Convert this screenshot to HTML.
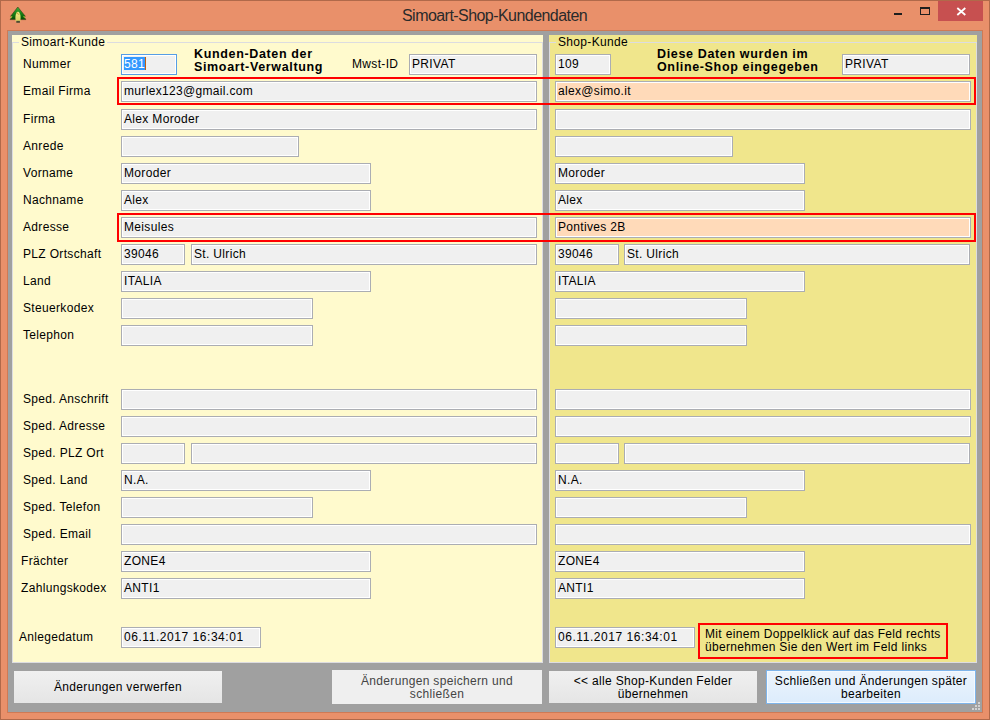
<!DOCTYPE html>
<html><head><meta charset="utf-8"><style>
*{margin:0;padding:0;box-sizing:border-box}
html,body{width:990px;height:720px;overflow:hidden;background:#e9906a}
body{position:relative;font-family:"Liberation Sans",sans-serif;font-size:12px;letter-spacing:0.33px;color:#000}
.a{position:absolute}
.f{position:absolute;height:21px;border:1px solid #abadb3;background:#f0f0f0;box-shadow:inset 0 0 0 1px #fff}
.t{position:absolute;white-space:pre;line-height:14px}
.lb{position:absolute;white-space:pre;line-height:14px}
.red{position:absolute;border:2px solid #ff0000}
.btn{position:absolute;text-align:center;line-height:13px;padding-top:1px;color:#000;display:flex;align-items:center;justify-content:center}
</style></head><body>

<div class="a" style="left:0;top:0;width:990px;height:720px;border:1px solid #b0694a"></div>
<svg class="a" style="left:5px;top:3px" width="25" height="25" viewBox="5 3 25 25">
<defs><linearGradient id="g1" x1="0" y1="0" x2="0" y2="1"><stop offset="0" stop-color="#3fb23a"/><stop offset="0.6" stop-color="#137a12"/><stop offset="1" stop-color="#064806"/></linearGradient>
<linearGradient id="g2" x1="0" y1="0" x2="0" y2="1"><stop offset="0" stop-color="#f4ee8a"/><stop offset="1" stop-color="#d8cf60"/></linearGradient></defs>
<path d="M17.8 7 L25.3 16.3 L24 16.6 L25.8 19.6 L10.2 19.6 L12 16.6 L10.6 16.3 Z" fill="url(#g1)" stroke="#3a3a10" stroke-width="0.6"/>
<path d="M10.8 16.2 L12.6 16.2 L11 18.6 Z M24.8 16.2 L23 16.2 L24.6 18.6 Z" fill="#9acd32"/>
<path d="M18 11.6 C19.9 12.4 20.7 15 20.6 18 L20.3 21.6 L15.7 21.6 L15.4 18 C15.3 15 16.1 12.4 18 11.6 Z" fill="url(#g2)"/>
<circle cx="17.3" cy="13.4" r="0.8" fill="#c8b040"/><circle cx="18.8" cy="14.2" r="0.7" fill="#c8b040"/>
<rect x="16.3" y="20.8" width="3.6" height="2" fill="#4a4a30"/>
</svg>
<div class="t" style="left:402px;top:5.5px;font-size:16px;letter-spacing:-0.55px;line-height:20px;color:#2a2a2a">Simoart-Shop-Kundendaten</div>
<div class="a" style="left:894px;top:13px;width:8px;height:2px;background:#1e1e1e"></div>
<div class="a" style="left:920px;top:7px;width:10px;height:8px;border:1px solid #1e1e1e;border-top-width:2px"></div>
<div class="a" style="left:938px;top:1px;width:45px;height:20px;background:#c75050"></div>
<svg class="a" style="left:956px;top:7px" width="11" height="9" viewBox="0 0 11 9"><path d="M1.3 1 L9.3 8 M9.3 1 L1.3 8" stroke="#fff" stroke-width="1.8"/></svg>
<div class="a" style="left:7px;top:30px;width:976px;height:683px;background:#a0a0a0;border:1px solid #cf7a55"></div>
<div class="a" style="left:12px;top:35px;width:531px;height:628px;background:#fffacd"></div>
<div class="a" style="left:549px;top:35px;width:428px;height:628px;background:#f0e68c"></div>
<div class="a" style="left:12px;top:42px;width:531px;height:621px;border:1px solid #dcdce0"></div>
<div class="a" style="left:549px;top:42px;width:428px;height:621px;border:1px solid #dcdce0"></div>
<div class="t" style="left:19px;top:35px;padding:0 2px;background:#fffacd">Simoart-Kunde</div>
<div class="t" style="left:556px;top:35px;padding:0 2px;background:#f0e68c">Shop-Kunde</div>
<div class="t" style="left:194px;top:48px;font-weight:bold;font-size:12.5px;letter-spacing:0.65px;line-height:13px">Kunden-Daten der<br>Simoart-Verwaltung</div>
<div class="t" style="left:352px;top:57px">Mwst-ID</div>
<div class="t" style="left:657px;top:48px;font-weight:bold;font-size:12.5px;letter-spacing:0.65px;line-height:13px">Diese Daten wurden im<br>Online-Shop eingegeben</div>
<div class="f" style="left:121px;top:54px;width:56px;border-color:#569de5"></div>
<div class="a" style="left:124px;top:57px;width:21px;height:13px;background:#3399ff"></div>
<div class="t" style="left:124px;top:57px;color:#fff">581</div>
<div class="a" style="left:145px;top:57px;width:1px;height:13px;background:#c06010"></div>
<div class="f" style="left:409px;top:54px;width:128px"></div>
<div class="t" style="left:412px;top:57px">PRIVAT</div>
<div class="f" style="left:555px;top:54px;width:56px"></div>
<div class="t" style="left:558px;top:57px">109</div>
<div class="f" style="left:842px;top:54px;width:128px"></div>
<div class="t" style="left:845px;top:57px">PRIVAT</div>
<div class="lb" style="left:23px;top:57px">Nummer</div>
<div class="lb" style="left:23px;top:84px">Email Firma</div>
<div class="lb" style="left:23px;top:112px">Firma</div>
<div class="lb" style="left:23px;top:139px">Anrede</div>
<div class="lb" style="left:23px;top:166px">Vorname</div>
<div class="lb" style="left:23px;top:193px">Nachname</div>
<div class="lb" style="left:23px;top:220px">Adresse</div>
<div class="lb" style="left:23px;top:247px">PLZ Ortschaft</div>
<div class="lb" style="left:23px;top:274px">Land</div>
<div class="lb" style="left:23px;top:301px">Steuerkodex</div>
<div class="lb" style="left:23px;top:328px">Telephon</div>
<div class="lb" style="left:23px;top:392px">Sped. Anschrift</div>
<div class="lb" style="left:23px;top:419px">Sped. Adresse</div>
<div class="lb" style="left:23px;top:446px">Sped. PLZ Ort</div>
<div class="lb" style="left:23px;top:473px">Sped. Land</div>
<div class="lb" style="left:23px;top:500px">Sped. Telefon</div>
<div class="lb" style="left:23px;top:527px">Sped. Email</div>
<div class="lb" style="left:21px;top:554px">Frächter</div>
<div class="lb" style="left:21px;top:581px">Zahlungskodex</div>
<div class="lb" style="left:19px;top:630px">Anlegedatum</div>
<div class="f" style="left:121px;top:81px;width:416px"></div>
<div class="t" style="left:124px;top:84px">murlex123@gmail.com</div>
<div class="f" style="left:555px;top:81px;width:416px;background:#ffdab9"></div>
<div class="t" style="left:558px;top:84px">alex@simo.it</div>
<div class="f" style="left:121px;top:109px;width:416px"></div>
<div class="t" style="left:124px;top:112px">Alex Moroder</div>
<div class="f" style="left:555px;top:109px;width:416px"></div>
<div class="f" style="left:121px;top:136px;width:178px"></div>
<div class="f" style="left:555px;top:136px;width:178px"></div>
<div class="f" style="left:121px;top:163px;width:250px"></div>
<div class="t" style="left:124px;top:166px">Moroder</div>
<div class="f" style="left:555px;top:163px;width:250px"></div>
<div class="t" style="left:558px;top:166px">Moroder</div>
<div class="f" style="left:121px;top:190px;width:250px"></div>
<div class="t" style="left:124px;top:193px">Alex</div>
<div class="f" style="left:555px;top:190px;width:250px"></div>
<div class="t" style="left:558px;top:193px">Alex</div>
<div class="f" style="left:121px;top:217px;width:416px"></div>
<div class="t" style="left:124px;top:220px">Meisules</div>
<div class="f" style="left:555px;top:217px;width:416px;background:#ffdab9"></div>
<div class="t" style="left:558px;top:220px">Pontives 2B</div>
<div class="f" style="left:121px;top:244px;width:64px"></div>
<div class="t" style="left:124px;top:247px">39046</div>
<div class="f" style="left:555px;top:244px;width:64px"></div>
<div class="t" style="left:558px;top:247px">39046</div>
<div class="f" style="left:191px;top:244px;width:346px"></div>
<div class="t" style="left:194px;top:247px">St. Ulrich</div>
<div class="f" style="left:624px;top:244px;width:346px"></div>
<div class="t" style="left:627px;top:247px">St. Ulrich</div>
<div class="f" style="left:121px;top:271px;width:250px"></div>
<div class="t" style="left:124px;top:274px">ITALIA</div>
<div class="f" style="left:555px;top:271px;width:250px"></div>
<div class="t" style="left:558px;top:274px">ITALIA</div>
<div class="f" style="left:121px;top:298px;width:192px"></div>
<div class="f" style="left:555px;top:298px;width:192px"></div>
<div class="f" style="left:121px;top:325px;width:192px"></div>
<div class="f" style="left:555px;top:325px;width:192px"></div>
<div class="f" style="left:121px;top:389px;width:416px"></div>
<div class="f" style="left:555px;top:389px;width:416px"></div>
<div class="f" style="left:121px;top:416px;width:416px"></div>
<div class="f" style="left:555px;top:416px;width:416px"></div>
<div class="f" style="left:121px;top:443px;width:64px"></div>
<div class="f" style="left:555px;top:443px;width:64px"></div>
<div class="f" style="left:191px;top:443px;width:346px"></div>
<div class="f" style="left:624px;top:443px;width:346px"></div>
<div class="f" style="left:121px;top:470px;width:250px"></div>
<div class="t" style="left:124px;top:473px">N.A.</div>
<div class="f" style="left:555px;top:470px;width:250px"></div>
<div class="t" style="left:558px;top:473px">N.A.</div>
<div class="f" style="left:121px;top:497px;width:192px"></div>
<div class="f" style="left:555px;top:497px;width:192px"></div>
<div class="f" style="left:121px;top:524px;width:416px"></div>
<div class="f" style="left:555px;top:524px;width:416px"></div>
<div class="f" style="left:121px;top:551px;width:250px"></div>
<div class="t" style="left:124px;top:554px">ZONE4</div>
<div class="f" style="left:555px;top:551px;width:250px"></div>
<div class="t" style="left:558px;top:554px">ZONE4</div>
<div class="f" style="left:121px;top:578px;width:250px"></div>
<div class="t" style="left:124px;top:581px">ANTI1</div>
<div class="f" style="left:555px;top:578px;width:250px"></div>
<div class="t" style="left:558px;top:581px">ANTI1</div>
<div class="f" style="left:121px;top:627px;width:140px"></div>
<div class="t" style="left:124px;top:630px;letter-spacing:0.55px">06.11.2017 16:34:01</div>
<div class="f" style="left:555px;top:627px;width:140px"></div>
<div class="t" style="left:558px;top:630px;letter-spacing:0.55px">06.11.2017 16:34:01</div>
<div class="red" style="left:117px;top:77px;width:859px;height:28px"></div>
<div class="red" style="left:117px;top:213px;width:859px;height:29px"></div>
<div class="red" style="left:698px;top:623px;width:250px;height:36px"></div>
<div class="t" style="left:705px;top:628px;line-height:13px">Mit einem Doppelklick auf das Feld rechts<br>übernehmen Sie den Wert im Feld links</div>
<div class="btn" style="left:14px;top:671px;width:208px;height:32px;background:linear-gradient(#f0f0f0,#e5e5e5)">Änderungen verwerfen</div>
<div class="btn" style="left:332px;top:670px;width:210px;height:34px;background:#efefef;color:#444">Änderungen speichern und<br>schließen</div>
<div class="btn" style="left:549px;top:671px;width:208px;height:32px;background:linear-gradient(#f0f0f0,#e5e5e5)">&lt;&lt; alle Shop-Kunden Felder<br>übernehmen</div>
<div class="btn" style="left:766px;top:670px;width:210px;height:34px;background:linear-gradient(#ecf4fc,#dcecfc);border:1px solid #7eb4ea;box-shadow:inset 0 0 0 1px #f4f9fe">Schließen und Änderungen später<br>bearbeiten</div>
<div class="a" style="left:978px;top:702px;width:2px;height:2px;background:#d2d2d2"></div>
<div class="a" style="left:975px;top:705px;width:2px;height:2px;background:#d2d2d2"></div>
<div class="a" style="left:978px;top:705px;width:2px;height:2px;background:#d2d2d2"></div>
<div class="a" style="left:972px;top:708px;width:2px;height:2px;background:#d2d2d2"></div>
<div class="a" style="left:975px;top:708px;width:2px;height:2px;background:#d2d2d2"></div>
<div class="a" style="left:978px;top:708px;width:2px;height:2px;background:#d2d2d2"></div>
</body></html>
